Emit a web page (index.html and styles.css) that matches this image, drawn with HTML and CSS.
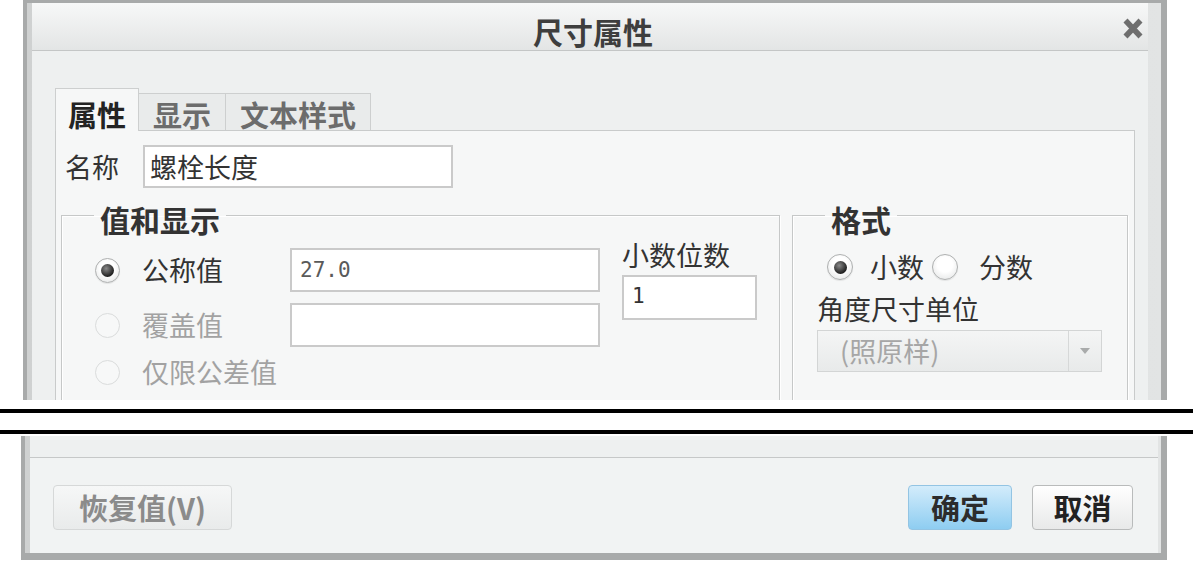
FILE: index.html
```html
<!DOCTYPE html>
<html lang="zh-CN">
<head>
<meta charset="utf-8">
<title>尺寸属性</title>
<link rel="stylesheet" href="styles.css">
</head>
<body>
<div class="screen">
  <div class="dlg-top">
    <div class="titlebar">
      <span class="title">尺寸属性</span>
      <svg class="close" width="20" height="21" viewBox="0 0 20 21" aria-label="关闭">
        <path d="M2.5 2.5 L17.5 18.5 M17.5 2.5 L2.5 18.5" stroke="#6e6e6e" stroke-width="5.5" stroke-linecap="butt" fill="none"/>
      </svg>
    </div>
    <div class="body">
      <div class="tabs">
        <div class="tab active">属性</div>
        <div class="tab">显示</div>
        <div class="tab">文本样式</div>
      </div>
      <div class="panel">
        <div class="name-row">
          <span class="lbl">名称</span>
          <div class="input name-input">螺栓长度</div>
        </div>
        <div class="groups">
          <fieldset class="fs fs-value">
            <legend>值和显示</legend>
            <div class="fs-body">
              <div class="opts">
                <div class="opt-row">
                  <span class="radio-label"><span class="radio checked"></span>公称值</span>
                  <div class="input val-input mono">27.0</div>
                </div>
                <div class="opt-row">
                  <span class="radio-label disabled"><span class="radio"></span>覆盖值</span>
                  <div class="input val-input"></div>
                </div>
                <div class="opt-row last">
                  <span class="radio-label disabled"><span class="radio"></span>仅限公差值</span>
                </div>
              </div>
              <div class="decimals">
                <div class="dec-label">小数位数</div>
                <div class="input dec-input mono">1</div>
              </div>
            </div>
          </fieldset>
          <fieldset class="fs fs-format">
            <legend>格式</legend>
            <div class="fs-body fmt-body">
              <div class="fmt-radios">
                <span class="radio checked"></span><span class="fmt-txt first">小数</span>
                <span class="radio r2"></span><span class="fmt-txt second">分数</span>
              </div>
              <div class="fmt-label">角度尺寸单位</div>
              <div class="select">
                <span class="sel-val">(照原样)</span>
                <span class="sel-arrow"><svg width="10" height="6" viewBox="0 0 10 6"><path d="M0 0 L10 0 L5 6 Z" fill="#a9abab"/></svg></span>
              </div>
            </div>
          </fieldset>
        </div>
      </div>
    </div>
  </div>
  <div class="break">
    <div class="cut"></div>
    <div class="cut"></div>
  </div>
  <div class="dlg-bottom">
    <div class="tail"></div>
    <div class="footer">
      <button class="btn btn-restore">恢复值(V)</button>
      <span class="spacer"></span>
      <button class="btn btn-ok">确定</button>
      <button class="btn btn-cancel">取消</button>
    </div>
  </div>
</div>
</body>
</html>
```

FILE: styles.css
```css
* { box-sizing: border-box; }
body {
  margin: 0;
  background: #fff;
  font-family: "Noto Sans CJK SC", "Noto Sans", sans-serif;
  color: #333;
}
.screen { width: 1193px; height: 562px; overflow: hidden; }

/* ---------- top fragment ---------- */
.dlg-top {
  margin-left: 23px;
  width: 1144px;
  height: 400px;
  overflow: hidden;
  border: solid #a8aaaa;
  border-width: 3px 6px 0 4px;
  padding: 0 13px 0 5px;
  background: linear-gradient(90deg, #cfd1d1, #e2e4e4);
  display: flex;
  flex-direction: column;
}
.titlebar {
  height: 48px;
  flex: none;
  display: grid;
  grid-template-columns: 1fr auto 1fr;
  align-items: center;
  background: linear-gradient(#f7f8f8, #e3e5e5);
  border-bottom: 1px solid #c4c6c6;
}
.title {
  grid-column: 2;
  font-size: 30px;
  font-weight: bold;
  line-height: 30px;
  color: #3e3e3e;
  margin-top: 8px;
  margin-left: 6px;
}
.close { grid-column: 3; justify-self: end; margin: 3px 5px 0 0; }

.body {
  flex: 1;
  background: #eef0f0;
  padding: 37px 13px 0 23px;
  display: flex;
  flex-direction: column;
}
.tabs { display: flex; align-items: flex-end; }
.tab {
  font-size: 29px;
  font-weight: bold;
  line-height: 30px;
  color: #6c6c6c;
  background: #e9ebeb;
  border: 1px solid #cdcfcf;
  border-bottom: none;
  padding: 5px 14px 1px;
  margin-left: -1px;
}
.tab.active {
  color: #232323;
  background: #f6f7f7;
  padding: 10px 12px 2px;
  margin: 0 0 -1px 0;
  position: relative;
  z-index: 1;
}
.panel {
  flex: 1;
  background: #f6f7f7;
  border: 1px solid #c9cbcb;
  padding: 14px 6px 0 5px;
}
.name-row { display: flex; align-items: center; padding-left: 4px; }
.lbl { width: 78px; font-size: 27px; line-height: 30px; color: #333; }
.input {
  background: #fff;
  border: 2px solid #cacaca;
}
.name-input {
  width: 310px;
  height: 43px;
  font-size: 27px;
  line-height: 39px;
  padding-left: 5px;
  color: #333;
}
.mono { font-family: "DejaVu Sans Mono", "Liberation Mono", monospace; font-size: 21px; color: #5a5a5a; }

.groups { display: flex; gap: 12px; margin-top: 8px; }
.fs {
  margin: 0;
  padding: 0;
  min-width: 0;
  border: 1px solid #c6c8c8;
  box-shadow: inset 1px 1px 0 #fff, 1px 1px 0 #fff;
  height: 260px;
}
.fs-value { width: 719px; }
.fs-format { width: 336px; }
.fs legend {
  font-size: 30px;
  font-weight: bold;
  line-height: 30px;
  padding: 8px 6px 0;
  margin-left: 32px;
  color: #333;
}
.fs-body { display: flex; padding: 6px 0 0 33px; }
.opts { padding-top: 8px; }
.opt-row { display: flex; align-items: center; height: 44px; }
.opt-row + .opt-row { margin-top: 11px; }
.opt-row.last { margin-top: 3px; }
.radio-label {
  width: 195px;
  display: flex;
  align-items: center;
  gap: 22px;
  font-size: 27px;
  line-height: 30px;
  color: #333;
}
.radio-label.disabled { color: #a2a2a2; }
.radio {
  flex: none;
  width: 25px;
  height: 25px;
  border-radius: 50%;
  border: 1px solid #aeb0b0;
  background: radial-gradient(circle at 50% 40%, #ffffff 40%, #dfe1e1);
  box-shadow: 0 1px 1px rgba(0,0,0,0.08);
  display: flex;
  align-items: center;
  justify-content: center;
}
.radio-label.disabled .radio { border-color: #dadcdc; background: #f7f8f8; box-shadow: none; }
.radio.checked::after {
  content: "";
  width: 13px;
  height: 13px;
  border-radius: 50%;
  background: radial-gradient(circle at 40% 35%, #8a8a8a, #1f1f1f 70%);
}
.val-input { width: 310px; height: 44px; line-height: 40px; padding-left: 8px; }
.decimals { margin-left: 22px; width: 135px; }
.dec-label { font-size: 27px; line-height: 30px; color: #333; }
.dec-input { margin-top: 5px; height: 45px; line-height: 38px; padding-left: 8px; color: #333; }

.fmt-body { flex-direction: column; padding-left: 24px; }
.fmt-radios { display: flex; align-items: center; height: 30px; margin: 12px 0 0 10px; }
.fmt-radios .radio { width: 26px; height: 26px; }
.fmt-txt { font-size: 27px; line-height: 30px; color: #333; }
.fmt-txt.first { margin-left: 17px; }
.r2 { margin-left: 8px; }
.fmt-txt.second { margin-left: 21px; }
.fmt-label { margin-top: 12px; font-size: 27px; line-height: 30px; color: #333; }
.select {
  margin-top: 6px;
  width: 285px;
  height: 42px;
  display: flex;
  border: 1px solid #d3d5d5;
  background: linear-gradient(#f4f5f5, #e8eaea);
}
.sel-val {
  flex: 1;
  padding-left: 22px;
  font-size: 27px;
  line-height: 40px;
  color: #a6a6a6;
  border-right: 1px solid #d6d8d8;
}
.sel-arrow { width: 32px; display: flex; align-items: center; justify-content: center; }

/* ---------- break ---------- */
.break {
  height: 36px;
  display: flex;
  flex-direction: column;
  gap: 17px;
  padding-top: 9px;
}
.cut { height: 4px; background: #000; }

/* ---------- bottom fragment ---------- */
.dlg-bottom {
  margin-left: 21px;
  width: 1146px;
  height: 124px;
  border: solid #a8aaaa;
  border-width: 0 6px 7px 4px;
  padding: 0 3px 0 5px;
  background: linear-gradient(90deg, #cfd1d1, #e2e4e4);
  display: flex;
  flex-direction: column;
}
.tail { height: 22px; flex: none; background: #eef0f0; border-bottom: 1px solid #c6c8c8; }
.footer {
  flex: 1;
  background: #f1f3f3;
  display: flex;
  align-items: flex-start;
  padding: 27px 25px 0 23px;
}
.spacer { flex: 1; }
.btn {
  height: 45px;
  padding: 0;
  border-radius: 4px;
  font-family: inherit;
  font-size: 29px;
  font-weight: bold;
  line-height: 43px;
}
.btn-restore {
  width: 179px;
  color: #8b8b8b;
  border: 1px solid #d6d8d8;
  background: linear-gradient(#f6f7f7, #e9ebeb);
}
.btn-ok {
  width: 104px;
  color: #2c2c2c;
  border: 1px solid #93c4e3;
  background: linear-gradient(#d3ecfb, #8ecdf1);
}
.btn-cancel {
  width: 101px;
  margin-left: 20px;
  color: #222;
  border: 1px solid #b9bbbb;
  background: linear-gradient(#ffffff, #e8e9e9);
}
```
